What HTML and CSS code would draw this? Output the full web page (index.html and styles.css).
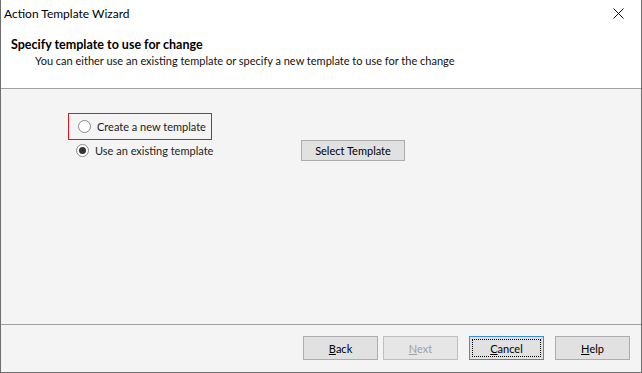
FILE: index.html
```html
<!DOCTYPE html>
<html lang="en">
<head>
    <meta charset="UTF-8">
    <title>Action Template Wizard</title>
    <link rel="stylesheet" href="styles.css">
</head>
<body>
    <div class="window">
        <!-- Title bar -->
        <div class="titlebar">
            <span class="title">Action Template Wizard</span>
            <svg class="close" width="11" height="11" viewBox="0 0 11 11">
                <path d="M0.5 0.5 L10.5 10.5 M10.5 0.5 L0.5 10.5" stroke="#111" stroke-width="1" fill="none"/>
            </svg>
        </div>

        <!-- Header -->
        <div class="header">
            <div class="heading">Specify template to use for change</div>
            <div class="subheading">You can either use an existing template or specify a new template to use for the change</div>
        </div>

        <!-- Body -->
        <div class="content">
            <label class="option highlighted">
                <span class="radio"></span>
                <span>Create a new template</span>
            </label>
            <div class="option-row">
                <label class="option">
                    <span class="radio checked"></span>
                    <span>Use an existing template</span>
                </label>
                <button class="btn select-btn">Select Template</button>
            </div>
        </div>

        <!-- Footer -->
        <div class="footer">
            <button class="btn"><u>B</u>ack</button>
            <button class="btn disabled"><u>N</u>ext</button>
            <button class="btn default"><span class="focus"><u>C</u>ancel</span></button>
            <button class="btn"><u>H</u>elp</button>
        </div>
    </div>
</body>
</html>
```

FILE: styles.css
```css
body {
    margin: 0;
    font-family: Lato, "Noto Sans", sans-serif;
    font-size: 11px;
    color: #000;
    white-space: nowrap;
}
.window {
    width: 642px;
    height: 373px;
    box-sizing: border-box;
    border: 1px solid #6e6e6e;
    border-top: none;
    display: flex;
    flex-direction: column;
    background: #f4f4f4;
}
.titlebar {
    height: 30px;
    background: #fff;
    display: flex;
    align-items: center;
    justify-content: space-between;
    padding: 0 17px 4px 3px;
    box-sizing: border-box;
}
.title {
    font-size: 12px;
    color: #000;
}
.header {
    height: 59px;
    background: #fff;
    border-bottom: 1px solid #a0a0a0;
    box-sizing: border-box;
    padding-top: 7px;
}
.heading {
    font-weight: bold;
    font-size: 12.5px;
    padding-left: 10px;
    line-height: 16px;
}
.subheading {
    padding-left: 34px;
    line-height: 15px;
    color: #111;
}
.content {
    flex: 1;
    padding: 24px 0 0 67px;
}
.option {
    display: flex;
    align-items: center;
    gap: 6px;
    color: #222;
    height: 25px;
}
.option.highlighted {
    width: 144px;
    height: 27px;
    box-sizing: border-box;
    border: 1px solid #e3141b;
    padding-left: 9px;
}
.option-row {
    display: flex;
    align-items: center;
    padding-left: 8px;
    margin-top: -2px;
}
.option-row .option {
    width: 225px;
}
.radio {
    flex-shrink: 0;
    width: 13px;
    height: 13px;
    box-sizing: border-box;
    border: 1px solid #8a8a8a;
    border-radius: 50%;
    background: #fff;
    display: flex;
    align-items: center;
    justify-content: center;
}
.radio.checked::after {
    content: "";
    width: 7px;
    height: 7px;
    border-radius: 50%;
    background: #333;
}
.btn {
    font-family: inherit;
    font-size: 11px;
    color: #000;
    background: #e1e1e1;
    border: 1px solid #adadad;
    width: 75px;
    height: 24px;
    padding: 0;
    display: flex;
    align-items: center;
    justify-content: center;
}
.select-btn {
    width: 104px;
    height: 21px;
}
.btn.disabled {
    color: #a0a0a0;
    border-color: #bfbfbf;
    background: #e6e6e6;
}
.btn.default {
    border-color: #3c8de0;
}
.focus {
    border: 1px dotted #000;
    width: 67px;
    height: 16px;
    display: flex;
    align-items: center;
    justify-content: center;
}
.footer {
    height: 48px;
    border-top: 1px solid #a0a0a0;
    box-sizing: border-box;
    display: flex;
    justify-content: flex-end;
    padding: 11px 11px 0 0;
    gap: 5px;
}
.footer .btn:nth-child(3),
.footer .btn:nth-child(4) {
    margin-left: 6px;
}
```
